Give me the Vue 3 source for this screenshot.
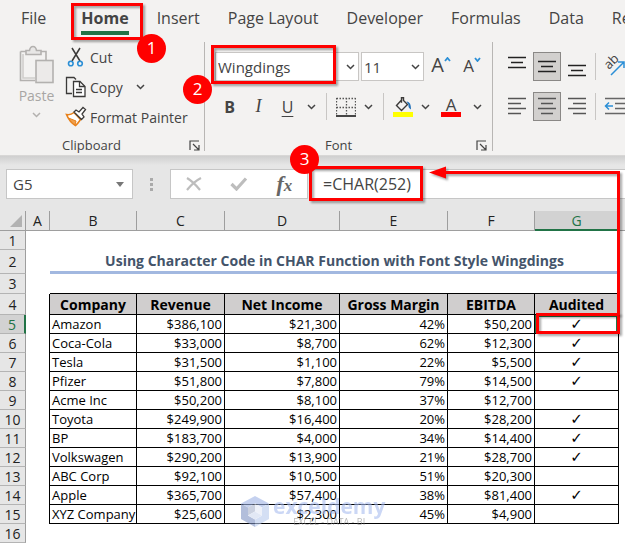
<script setup>
import { ref } from 'vue'

const tabs = ['File', 'Home', 'Insert', 'Page Layout', 'Developer', 'Formulas', 'Data', 'Review']
const activeTab = ref('Home')
const fontName = ref('Wingdings')
const fontSize = ref('11')
const cellName = ref('G5')
const formula = ref('=CHAR(252)')
const columns = ['A', 'B', 'C', 'D', 'E', 'F', 'G']
const headings = ['Company', 'Revenue', 'Net Income', 'Gross Margin', 'EBITDA', 'Audited']
const companies = [
  ['Amazon', '$386,100', '$21,300', '42%', '$50,200', true],
  ['Coca-Cola', '$33,000', '$8,700', '62%', '$12,300', true],
  ['Tesla', '$31,500', '$1,100', '22%', '$5,500', true],
  ['Pfizer', '$51,800', '$7,800', '79%', '$14,500', true],
  ['Acme Inc', '$50,200', '$8,100', '37%', '$12,700', false],
  ['Toyota', '$249,900', '$16,400', '20%', '$28,200', true],
  ['BP', '$183,700', '$4,000', '34%', '$14,400', true],
  ['Volkswagen', '$290,200', '$13,900', '21%', '$28,700', true],
  ['ABC Corp', '$92,100', '$10,500', '51%', '$20,300', false],
  ['Apple', '$365,700', '$57,400', '38%', '$81,400', true],
  ['XYZ Company', '$25,600', '$2,300', '45%', '$4,900', false],
]
const vertical = [
  { name: 'Top Align', lines: [[0, 18, 5], [3, 15, 10], [0, 18, 15]] },
  { name: 'Middle Align', on: true, lines: [[0, 18, 9], [3, 15, 14], [0, 18, 19]] },
  { name: 'Bottom Align', lines: [[0, 18, 13], [3, 15, 18], [0, 18, 23]] },
]
const horizontal = [
  { name: 'Align Left', lines: [[0, 18, 6], [0, 13, 11], [0, 18, 16], [0, 13, 21]] },
  { name: 'Center', on: true, lines: [[0, 18, 6], [3, 15, 11], [0, 18, 16], [3, 15, 21]] },
  { name: 'Align Right', lines: [[0, 18, 6], [5, 18, 11], [0, 18, 16], [5, 18, 21]] },
]
</script>

<template>
  <div class="excel">
    <header class="ribbon">
      <nav class="tabs">
        <a v-for="t in tabs" :key="t" href="#" :class="{ active: t === activeTab }" @click.prevent="activeTab = t">{{ t }}</a>
      </nav>
      <div class="groups">
        <section class="group clipboard">
          <div class="clip-body">
            <button class="paste">
              <svg width="36" height="40" viewBox="0 0 36 40" fill="none" stroke="#b3b1af" stroke-width="1.6">
                <path d="M1.500 6.500H27V15M16 35.500H1.500V6.500" />
                <path d="M4 9v24h12" stroke="#d0cecc" />
                <path d="M7 9.500V5.500h3.500C11 2.500 12.500 1.500 14 1.500s3 1 3.500 4H22v4z" fill="#e8e7e6" />
                <rect x="17" y="15.500" width="17" height="22" fill="#eceae9" />
              </svg>
              <span>Paste</span>
              <svg class="chev" width="9" height="6" viewBox="0 0 9 6"><path d="M1 1l3.500 3.500L8 1" /></svg>
            </button>
            <div class="clip-list">
              <button>
                <svg width="22" height="22" viewBox="0 0 22 22" fill="none">
                  <path d="M7 2l8 13M15 2L7 15" stroke="#3b3a39" stroke-width="1.500" />
                  <circle cx="5.800" cy="17.500" r="2.300" stroke="#2b8fd6" stroke-width="1.600" />
                  <circle cx="15" cy="17.500" r="2.300" stroke="#2b8fd6" stroke-width="1.600" />
                </svg>
                <span>Cut</span>
              </button>
              <button>
                <svg width="22" height="22" viewBox="0 0 22 22" fill="none" stroke="#3b3a39" stroke-width="1.300">
                  <path d="M7 17.500H1.500v-16H9l2 2" />
                  <path d="M8.500 5.500h6.500l5 5v10H8.500z" fill="#fff" />
                  <path d="M14.500 5.500v5H20M11 13.500h6M11 16.500h6" />
                </svg>
                <span>Copy</span>
                <svg class="chev copy-chev" width="9" height="6" viewBox="0 0 9 6"><path d="M1 1l3.500 3.500L8 1" /></svg>
              </button>
              <button>
                <svg width="22" height="22" viewBox="0 0 22 22" fill="none">
                  <path d="M1.500 8.500C4 9 6.500 8.500 9 6.500l6.500 7c-2 3-3.500 5-5 6C7 17.500 3.500 13.500 1.500 8.500z" fill="#fff" stroke="#e8811a" stroke-width="1.600" />
                  <path d="M3.500 12l7.500 3-1 4c-2.500-1.500-5-4-6.500-7z" fill="#f0a04c" stroke="#e8811a" />
                  <path d="M9 6l2-2 3 2 4-4.500 2.500 2L17 8l2 3-2.500 2.500z" fill="#fff" stroke="#3b3a39" stroke-width="1.300" />
                </svg>
                <span>Format Painter</span>
              </button>
            </div>
          </div>
          <footer><span>Clipboard</span>
            <button class="launch" aria-label="Clipboard settings"><svg width="11" height="11" viewBox="0 0 11 11"><path d="M1 10V1h9M4 4l5.500 5.500M10 5v5H5" /></svg></button>
          </footer>
        </section>

        <section class="group font">
          <div class="row">
            <label class="combo name">
              <select v-model="fontName" aria-label="Font"><option>Wingdings</option></select>
              <svg class="chev" width="9" height="6" viewBox="0 0 9 6"><path d="M1 1l3.500 3.500L8 1" /></svg>
            </label>
            <label class="combo size">
              <select v-model="fontSize" aria-label="Font size"><option>11</option></select>
              <svg class="chev" width="9" height="6" viewBox="0 0 9 6"><path d="M1 1l3.500 3.500L8 1" /></svg>
            </label>
            <button class="grow"><span>A</span><svg width="7" height="5" viewBox="0 0 7 5"><path d="M1 4l2.500-3L6 4" /></svg></button>
            <button class="grow shrink"><span>A</span><svg width="7" height="5" viewBox="0 0 7 5"><path d="M1 1l2.500 3L6 1" /></svg></button>
          </div>
          <div class="row">
            <button class="tool"><b>B</b></button>
            <button class="tool"><i>I</i></button>
            <button class="tool"><u>U</u></button>
            <button class="drop" aria-label="Underline styles"><svg class="chev" width="9" height="6" viewBox="0 0 9 6"><path d="M1 1l3.500 3.500L8 1" /></svg></button>
            <span class="rule"></span>
            <button class="tool slim" aria-label="Borders">
              <svg width="20" height="20" viewBox="0 0 20 20" fill="none" stroke="#555">
                <path d="M.5 1.500h19M.5 10.500h19M.5 1v18M10.500 1v18M19.500 1v18" stroke-dasharray="1.500 1.500" stroke-width="1.300" />
                <path d="M0 19h20" stroke="#333" stroke-width="1.800" />
              </svg>
            </button>
            <button class="drop" aria-label="Border styles"><svg class="chev" width="9" height="6" viewBox="0 0 9 6"><path d="M1 1l3.500 3.500L8 1" /></svg></button>
            <span class="rule"></span>
            <button class="tool slim" aria-label="Fill color">
              <svg width="20" height="20" viewBox="0 0 20 20" fill="none">
                <path d="M9 2.500L3.500 8.500 8.500 13.500l6-6-4-4V.800H8.500v5" stroke="#3b3a39" stroke-width="1.400" />
                <path d="M13.500 4.500c3.500.5 4.500 3 4.500 8-2-1-3-3-2.500-5z" fill="#2070b8" />
                <path d="M0 15h20v5H0z" fill="#ff0" />
              </svg>
            </button>
            <button class="drop" aria-label="Fill colors"><svg class="chev" width="9" height="6" viewBox="0 0 9 6"><path d="M1 1l3.500 3.500L8 1" /></svg></button>
            <button class="tool letter"><span>A</span></button>
            <button class="drop" aria-label="Font colors"><svg class="chev" width="9" height="6" viewBox="0 0 9 6"><path d="M1 1l3.500 3.500L8 1" /></svg></button>
          </div>
          <footer><span>Font</span>
            <button class="launch" aria-label="Font settings"><svg width="11" height="11" viewBox="0 0 11 11"><path d="M1 10V1h9M4 4l5.500 5.500M10 5v5H5" /></svg></button>
          </footer>
        </section>

        <section class="group alignment">
          <div class="row">
            <button v-for="a in vertical" :key="a.name" class="align" :class="{ on: a.on }" :aria-label="a.name">
              <svg width="18" height="27" viewBox="0 0 18 27"><path v-for="(l, i) in a.lines" :key="i" :d="`M${l[0]} ${l[2] - .5}H${l[1]}`" /></svg>
            </button>
            <span class="rule"></span>
            <button class="edge" aria-label="Orientation">
              <svg width="22" height="27" viewBox="0 0 22 27" fill="none">
                <text x="5" y="17" transform="rotate(-45 5 17)" font-size="13" fill="#444">ab</text>
                <path d="M7 22L20 9M14 9h6v6" stroke="#2b8fd6" stroke-width="1.500" />
              </svg>
            </button>
          </div>
          <div class="row">
            <button v-for="a in horizontal" :key="a.name" class="align soft" :class="{ on: a.on }" :aria-label="a.name">
              <svg width="18" height="27" viewBox="0 0 18 27"><path v-for="(l, i) in a.lines" :key="i" :d="`M${l[0]} ${l[2] - .5}H${l[1]}`" /></svg>
            </button>
            <span class="rule"></span>
            <button class="edge" aria-label="Decrease indent">
              <svg width="22" height="27" viewBox="0 0 22 27" fill="none">
                <path d="M1 5.500h21M11 10.500h11M11 15.500h11M1 20.500h21" stroke="#666" stroke-width="1.500" />
                <path d="M9 13H2M5 9.500L1.500 13 5 16.500" stroke="#2b8fd6" stroke-width="1.500" />
              </svg>
            </button>
          </div>
        </section>
      </div>
    </header>

    <div class="formula-bar">
      <label class="name-box"><input v-model="cellName" aria-label="Name box"><svg width="8" height="5" viewBox="0 0 8 5"><path d="M0 0h8L4 5z" fill="#777" /></svg></label>
      <span class="grip"><i></i><i></i><i></i></span>
      <div class="entry">
        <button aria-label="Cancel"><svg width="16" height="14" viewBox="0 0 16 14" fill="none" stroke="#bdbdbd" stroke-width="2.200"><path d="M1 1c5 3 9 7 13 12M15 1C9 4 5 8 1 13" /></svg></button>
        <button aria-label="Enter"><svg width="18" height="14" viewBox="0 0 18 14" fill="none" stroke="#bdbdbd" stroke-width="3.200"><path d="M1.500 7l5 5L16 1.500" /></svg></button>
        <button class="fx"><span>f</span><small>x</small></button>
      </div>
      <input v-model="formula" class="formula" aria-label="Formula">
    </div>

    <table class="sheet">
      <colgroup><col class="c0"><col v-for="c in columns" :key="c" :class="'c' + c"><col></colgroup>
      <thead>
        <tr class="letters">
          <th class="corner"><svg width="12" height="12" viewBox="0 0 12 12"><path d="M12 0v12H0z" fill="#b2b2b2" /></svg></th>
          <th v-for="c in columns" :key="c" scope="col" :class="{ sel: c === 'G' }">{{ c }}</th>
          <th></th>
        </tr>
      </thead>
      <tbody>
        <tr><th scope="row">1</th><td colspan="8"></td></tr>
        <tr class="title-row"><th scope="row">2</th><td></td><td colspan="6" class="title">Using Character Code in CHAR Function with Font Style Wingdings</td><td></td></tr>
        <tr class="r3"><th scope="row">3</th><td></td><td v-for="c in 6" :key="c" class="above"></td><td></td></tr>
        <tr class="heads"><th scope="row">4</th><td class="before"></td><td v-for="h in headings" :key="h" class="cell head">{{ h }}</td><td></td></tr>
        <tr v-for="(r, i) in companies" :key="r[0]">
          <th scope="row" :class="{ sel: i === 0 }">{{ i + 5 }}</th>
          <td class="before"></td>
          <td class="cell">{{ r[0] }}</td>
          <td v-for="n in 4" :key="n" class="cell num">{{ r[n] }}</td>
          <td class="cell tick" :class="{ current: i === 0 }"><span>{{ r[5] ? '✓' : '' }}</span></td>
          <td></td>
        </tr>
        <tr><th scope="row">16</th><td colspan="8"></td></tr>
      </tbody>
    </table>

    <div class="watermark">
      <svg width="28" height="31" viewBox="0 0 28 31">
        <path d="M14 0l14 7.500-7 4-7-4-7 4-7-4z" fill="#9fb4e6" />
        <path d="M0 7.500l7 4v8l7 4V31L0 23z" fill="#7f93c4" />
        <path d="M28 7.500V23l-14 8v-7.500l7-4v-8z" fill="#b9cbee" />
        <path d="M7 11.500l7-4v8l-7 4z" fill="#a9b4cc" />
        <path d="M14 7.500l7 4v8l-7-4z" fill="#e3e9f6" />
        <path d="M7 19.500l7-4 7 4-7 4z" fill="#cfd9f0" />
      </svg>
      <p><strong>exceldemy</strong><small>EXCEL - DATA - BI</small></p>
    </div>

    <div class="mark mark-home"></div>
    <div class="mark mark-font"></div>
    <div class="mark mark-formula"></div>
    <div class="mark mark-cell"></div>
    <svg class="arrow" width="200" height="160" viewBox="0 0 200 160">
      <path d="M18 12.500H193.500V155" fill="none" stroke="#f00" stroke-width="3" />
      <path d="M4 12.500L21 6.500v12z" fill="#f00" />
    </svg>
    <span class="step s1">1</span>
    <span class="step s2">2</span>
    <span class="step s3">3</span>
  </div>
</template>

<style>
body { margin: 0; background: #fff; }
</style>

<style scoped>
* { box-sizing: border-box; }
.excel { position: relative; overflow: hidden; font-family: "Open Sans", "Noto Sans", sans-serif; color: #444; }
button, input, select { font: inherit; color: inherit; border: 0; padding: 0; margin: 0; background: none; min-width: 0; }
button { display: flex; align-items: center; justify-content: center; }
svg { display: block; flex: none; }

.ribbon { background: #f3f2f1; border-bottom: 1px solid #d8d7d6; }
.tabs { display: flex; gap: 28px; height: 40px; padding: 0 21px; font-size: 16px; line-height: 36px; white-space: nowrap; }
.tabs a { height: 35px; color: inherit; text-decoration: none; }
.tabs a:first-child { margin-right: 7px; }
.tabs .active { font-weight: 700; border-bottom: 4px solid #217346; }
.groups { display: flex; height: 115px; }
.group { display: flex; flex-direction: column; flex: none; margin: 2px 0 4px; border-right: 1px solid #b8b6b4; }
.group footer { display: flex; align-items: center; margin-top: auto; height: 12px; font-size: 13px; line-height: 12px; }
.group footer span { flex: 1; text-align: center; }
.launch svg, .chev { fill: none; stroke: #444; stroke-width: 1.500px; }
.launch svg { stroke-width: 1.200px; }

.clipboard { width: 205px; }
.clip-body { display: flex; gap: 10px; padding-left: 18px; }
.paste { flex-direction: column; justify-content: flex-start; width: 37px; padding-top: 3px; font-size: 14px; line-height: 22px; color: #a8a6a4; }
.paste .chev { stroke: #b3b1af; margin-top: 5px; }
.clip-list { display: flex; flex-direction: column; align-items: flex-start; }
.clip-list button { gap: 3px; height: 30px; font-size: 14px; }
.copy-chev { margin-left: 10px; }
.clipboard footer { padding: 0 4px 0 0; }
.clipboard footer span { padding-right: 6px; }

.row { display: flex; align-items: center; height: 29px; margin-bottom: 11px; }
.font { width: 288px; padding: 10px 5px 0 10px; }
.font footer span { padding-right: 14px; }
.combo { position: relative; display: flex; align-items: center; height: 29px; background: #fff; border: 1px solid #c8c6c4; font-size: 15px; }
.combo select { appearance: none; width: 100%; height: 27px; padding: 0 18px 0 2px; }
.combo .chev { position: absolute; right: 3px; }
.name { width: 144px; margin-right: 2px; }
.size { width: 63px; margin-right: 6px; }
.grow { align-items: flex-start; width: 22px; margin-right: 9px; height: 27px; font-size: 20px; line-height: 24px; }
.grow svg { fill: none; stroke: #2b8fd6; stroke-width: 1.800px; margin-top: 4px; }
.shrink { font-size: 17px; line-height: 26px; margin-right: 0; }
.tool { width: 29px; height: 29px; font-size: 16px; }
.tool i { font-family: "Liberation Serif", serif; font-size: 18px; }
.tool u { text-underline-offset: 3px; }
.tool.slim { width: 26px; }
.drop { width: 18px; height: 29px; }
.rule { width: 1px; height: 27px; margin: 0 6px; background: #c8c6c4; }
.tool.letter { width: 34px; font-size: 17px; }
.letter span { width: 20px; border-bottom: 5px solid #f00; line-height: 15px; text-align: center; }

.alignment { border: 0; flex: 1; padding: 10px 0 0 10px; }
.align { width: 28px; height: 29px; margin-right: 2px; border: 1px solid transparent; flex: none; }
.align.on { background: #d2d0ce; border-color: #8a8886; }
.align path { stroke: #222; stroke-width: 1.500px; }
.soft path { stroke: #555; }
.alignment .rule { margin: 0 8px 0 2px; flex: none; }
.edge { flex: none; }

.formula-bar { display: flex; align-items: center; height: 55px; padding: 1px 0 0 6px; font-size: 16px; background: linear-gradient(#cfcfcf, #e6e6e6 9px); }
.name-box { display: flex; align-items: center; width: 127px; height: 30px; padding: 0 8px 0 6px; background: #fff; border: 1px solid #c6c6c6; }
.name-box input { flex: 1; font-size: 15px; }
.grip { display: flex; flex-direction: column; gap: 2px; width: 37px; align-items: center; }
.grip i { width: 3px; height: 3px; background: #aaa; }
.entry { display: flex; width: 138px; height: 30px; background: #fff; border: 1px solid #c6c6c6; }
.entry button { flex: 1; }
.fx { font-family: "Liberation Serif", serif; font-style: italic; font-weight: 700; font-size: 22px; line-height: 24px; color: #666; }
.fx small { font-size: 17px; padding-top: 4px; }
.formula { flex: 1; height: 30px; margin-left: 2px; padding: 0 12px; background: #fff; border: 1px solid #c6c6c6; border-right: 0; }

.sheet { width: 100%; table-layout: fixed; border-collapse: separate; border-spacing: 0; font-size: 13px; line-height: 17px; color: #000; background: #fff; }
.c0 { width: 26px; } .cA { width: 24px; } .cB { width: 87px; } .cC { width: 88px; } .cD { width: 115px; }
.cE { width: 108px; } .cF { width: 87px; } .cG { width: 84px; }
.sheet tr { height: 19px; }
.sheet th, .sheet td { padding: 0; white-space: nowrap; overflow: hidden; }
.sheet th { font-weight: 400; font-size: 14px; color: #222; background: #e6e6e6; border-right: 1px solid #9e9e9e; border-bottom: 1px solid #b4b4b4; }
.sheet .letters { height: 20px; }
.letters th { border-bottom-color: #9e9e9e; }
.letters th:last-child { border-right: 0; }
.corner svg { margin-left: 10px; }
.sheet th.sel { background: #d2d2d2; color: #217346; }
.letters th.sel { border-bottom: 2px solid #217346; }
tbody th.sel { border-right: 2px solid #217346; }
.sheet .title-row { height: 24px; }
.sheet .title { border-bottom: 3px solid #a2b8e0; font-size: 14px; font-weight: 700; color: #44546a; text-align: center; }
.sheet .r3 { height: 20px; }
.above { border-bottom: 1px solid #000; }
.before { border-right: 1px solid #000; }
.sheet .heads { height: 21px; }
.sheet .cell { border-right: 1px solid #000; border-bottom: 1px solid #000; padding: 0 2px; }
.sheet .head { font-size: 14px; font-weight: 700; text-align: center; background: #d0cece; }
.sheet .num { text-align: right; }
.sheet .tick { text-align: center; font-family: "DejaVu Sans", sans-serif; font-size: 15px; }
.tick span { display: block; height: 17px; line-height: 16px; }
.sheet .current { box-shadow: inset 0 0 0 2px #217346; }

.watermark { position: absolute; left: 241px; top: 496px; display: flex; gap: 4px; opacity: .6; }
.watermark p { display: flex; flex-direction: column; align-items: center; margin: 0; }
.watermark strong { font-size: 21px; line-height: 21px; color: #a9bdf0; }
.watermark small { font-size: 9px; line-height: 9px; color: #888; }

.mark { position: absolute; border: 3px solid #f00; filter: drop-shadow(2px 2px 1px rgba(0, 0, 0, .35)); }
.mark-home { left: 71px; top: 3px; width: 72px; height: 37px; }
.mark-font { left: 211px; top: 45px; width: 125px; height: 39px; }
.mark-formula { left: 309px; top: 166px; width: 114px; height: 35px; }
.mark-cell { left: 536px; top: 313px; width: 84px; height: 21px; }
.arrow { position: absolute; left: 425px; top: 160px; filter: drop-shadow(2px 2px 1px rgba(0, 0, 0, .35)); }
.step { position: absolute; width: 29px; height: 29px; border-radius: 50%; background: #f00; color: #fff; font-size: 17px; line-height: 28px; text-align: center; }
.s1 { left: 137px; top: 34px; }
.s2 { left: 183px; top: 75px; }
.s3 { left: 290px; top: 145px; }
</style>
